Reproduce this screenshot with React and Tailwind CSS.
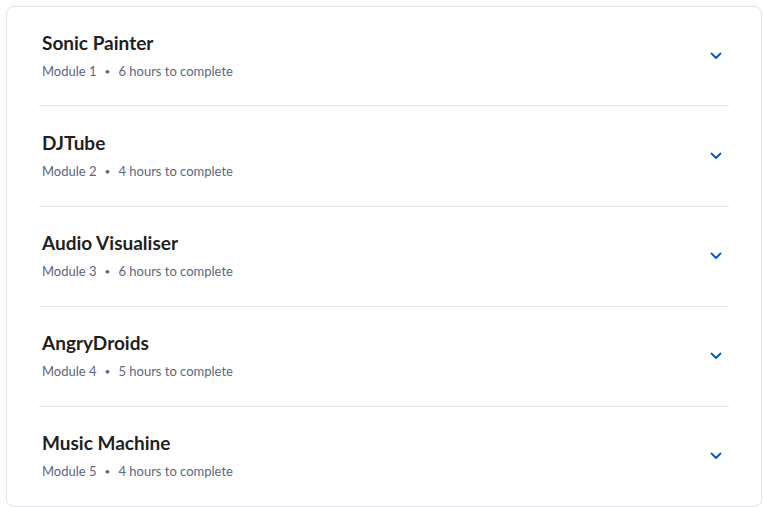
const modules = [
  { title: 'Sonic Painter', module: 'Module 1', hours: '6 hours to complete' },
  { title: 'DJTube', module: 'Module 2', hours: '4 hours to complete' },
  { title: 'Audio Visualiser', module: 'Module 3', hours: '6 hours to complete' },
  { title: 'AngryDroids', module: 'Module 4', hours: '5 hours to complete' },
  { title: 'Music Machine', module: 'Module 5', hours: '4 hours to complete' },
];

const Chevron = () => (
  <svg width="12" height="8" viewBox="0 0 12 8" fill="none" className="text-[#0056d2]">
    <path d="M1.5 1.5 6 6l4.5-4.5" stroke="currentColor" strokeWidth="1.8" strokeLinecap="round" strokeLinejoin="round" />
  </svg>
);

export default function App() {
  return (
    <div className="min-h-screen bg-white p-[6px] font-['Lato','Noto_Sans',sans-serif]">
      <div className="w-[756px] rounded-lg border border-[#dfe3e8] bg-white px-[32px]">
        {modules.map((item, index) => {
          const last = index === modules.length - 1;
          const spacing = index === 0 ? 'pt-[23px] pb-6' : index === 1 ? 'pt-6 pb-[25px]' : 'pt-[23px] pb-[25px]';
          return (
            <button
              key={item.title}
              type="button"
              className={`flex w-full items-center justify-between pl-[3px] pr-[7px] text-left ${spacing} ${last ? '' : 'border-b border-[#e1e4e8]'}`}
            >
              <div>
                <div className="text-[19px] font-bold leading-[26px] text-[#1f1f1f]">{item.title}</div>
                <div className="mt-[5px] flex items-center text-[13px] leading-5 text-[#5b6780]">
                  <span>{item.module}</span>
                  <span className="mx-[8px] text-[10px]">•</span>
                  <span>{item.hours}</span>
                </div>
              </div>
              <Chevron />
            </button>
          );
        })}
      </div>
    </div>
  );
}
